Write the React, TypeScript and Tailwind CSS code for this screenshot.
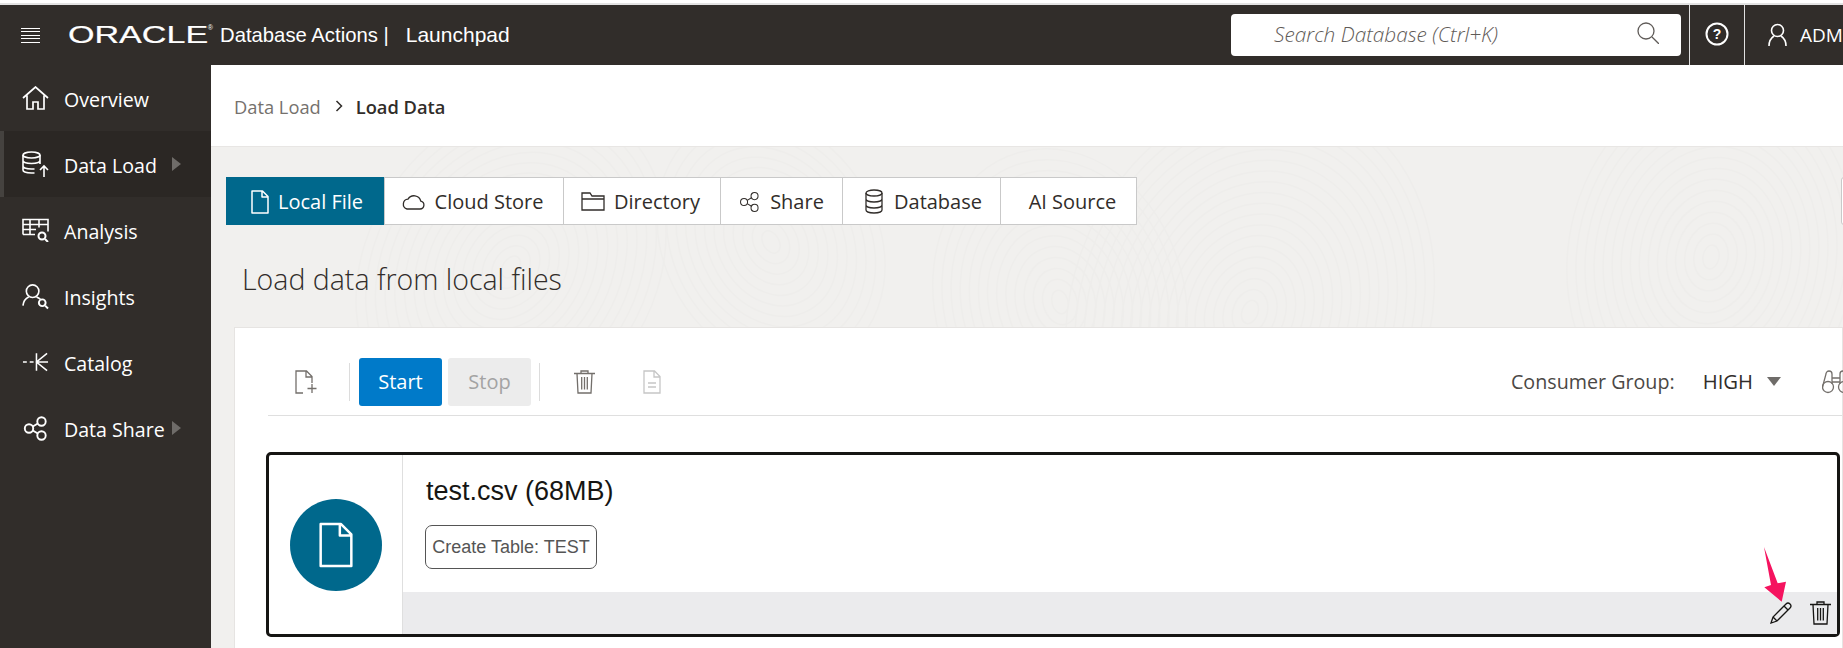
import type { ReactNode } from 'react';

const SEGOE = 'font-["Open_Sans",sans-serif]';

function Icon({ className, vb = '0 0 24 24', children }: { className: string; vb?: string; children: ReactNode }) {
  return (
    <svg viewBox={vb} fill="none" stroke="currentColor" strokeWidth="1.3" className={className}>
      {children}
    </svg>
  );
}

const HomeIcon = () => (
  <Icon vb="0 0 27 24" className="w-[27px] h-[24px]">
    <path d="M1 12 13.5 1 26 12M5 9.5V23h6v-7h5v7h6V9.5" strokeWidth="1.7" />
  </Icon>
);
const DataLoadIcon = () => (
  <Icon vb="0 0 27 26" className="w-[27px] h-[26px]">
    <ellipse cx="9.500" cy="4" rx="8.500" ry="3" strokeWidth="1.6" />
    <path d="M1 4v15c0 1.7 3.800 3 8.500 3h3M1 9.500c0 1.700 3.800 3 8.500 3s8.500-1.300 8.500-3M1 15c0 1.700 3.800 3 8.500 3h3M18 4v9" strokeWidth="1.6" />
    <path d="M22 26V15M18 19l4-4 4 4" strokeWidth="1.6" />
  </Icon>
);
const AnalysisIcon = () => (
  <Icon vb="0 0 27 24" className="w-[27px] h-[24px]">
    <path d="M1 16.500V1.500h25v12M1 6.500h25M1 11.500h13M1 16.500h12M8 1.500v15M17 1.500v8" strokeWidth="1.600" />
    <circle cx="20" cy="18" r="3.500" strokeWidth="2" />
    <path d="m23 21 3 3" strokeWidth="2" />
  </Icon>
);
const InsightsIcon = () => (
  <Icon vb="0 0 28 27" className="w-[28px] h-[27px]">
    <circle cx="11" cy="8" r="6.500" strokeWidth="1.700" />
    <path d="M7 14c-3.500 1.500-5.500 4-6 9M15 14c1.500.6 2.800 1.300 4 2.300" strokeWidth="1.700" />
    <circle cx="21" cy="20" r="3.500" strokeWidth="2" />
    <path d="m24 23 3 3" strokeWidth="2" />
  </Icon>
);
const CatalogIcon = () => (
  <Icon vb="0 0 28 20" className="w-[28px] h-[20px]">
    <path d="M1 10h4M8 10h4M15 1v18M26 1 15 10l11 9M15 10h12" strokeWidth="1.600" />
  </Icon>
);
const ShareIcon = ({ className = 'w-[25px] h-[25px]', sw = '1.900' }: { className?: string; sw?: string }) => (
  <Icon vb="0 0 25 25" className={className}>
    <circle cx="6" cy="12.500" r="4.200" strokeWidth={sw} />
    <circle cx="18.500" cy="5.500" r="4.200" strokeWidth={sw} />
    <circle cx="18.500" cy="19.500" r="4.200" strokeWidth={sw} />
    <path d="m9.800 10.500 5-3M9.800 14.500l5 3" strokeWidth={sw} />
  </Icon>
);
const FileIcon = ({ className, sw = '1.300' }: { className: string; sw?: string }) => (
  <Icon vb="0 0 18 24" className={className}>
    <path d="M1 1h10.500L17 6.500V23H1zM11 1v6h6" strokeWidth={sw} strokeLinejoin="round" />
  </Icon>
);
const TrashIcon = ({ className }: { className: string }) => (
  <Icon vb="0 0 21 24" className={className}>
    <path d="M0 3.500h21M7 3.500V1h7v2.500M3 3.500 4 23h13l1-19.500M7.700 7v12.500M10.500 7v12.500M13.300 7v12.500" />
  </Icon>
);

const navItems = [
  { label: 'Overview', icon: <HomeIcon /> },
  { label: 'Data Load', icon: <DataLoadIcon />, active: true, more: true },
  { label: 'Analysis', icon: <AnalysisIcon /> },
  { label: 'Insights', icon: <InsightsIcon /> },
  { label: 'Catalog', icon: <CatalogIcon /> },
  { label: 'Data Share', icon: <ShareIcon />, more: true },
];

const tabs = [
  {
    label: 'Local File',
    box: 'w-[158px] pl-[4px] gap-[9px]',
    active: true,
    icon: <FileIcon className="w-[18px] h-[24px]" sw="1.500" />,
  },
  {
    label: 'Cloud Store',
    box: 'w-[179px] pr-[4px] gap-[10px]',
    icon: (
      <Icon vb="0 0 24 17" className="w-[24px] h-[17px]">
        <path d="M6 16h13a4 4 0 0 0 .8-7.900A7 7 0 0 0 7 6.200 5 5 0 0 0 6 16z" />
      </Icon>
    ),
  },
  {
    label: 'Directory',
    box: 'w-[157px] pr-[3px] gap-[9px]',
    icon: (
      <Icon vb="0 0 24 19" className="w-[24px] h-[19px]">
        <path d="M1 18V1h8l2 3h12v14zM1 7h22" />
      </Icon>
    ),
  },
  { label: 'Share', box: 'w-[122px] gap-[10px]', icon: <ShareIcon className="w-[21px] h-[24px]" sw="1.200" /> },
  {
    label: 'Database',
    box: 'w-[158px] pl-[4px] gap-[11px]',
    icon: (
      <Icon vb="0 0 18 25" className="w-[18px] h-[25px]">
        <ellipse cx="9" cy="4" rx="8" ry="3" />
        <path d="M1 4v17c0 1.700 3.600 3 8 3s8-1.300 8-3V4M1 10c0 1.700 3.600 3 8 3s8-1.300 8-3M1 16c0 1.700 3.600 3 8 3s8-1.300 8-3" />
      </Icon>
    ),
  },
  { label: 'AI Source', box: 'w-[136px] pl-[8px]' },
];

// faint fingerprint swirls behind the content area
const swirls = [
  { cx: 1039, cy: 165, rings: 20, rot: 20 },
  { cx: 849, cy: 155, rings: 14, rot: -15 },
  { cx: 300, cy: 120, rings: 16, rot: 35 },
  { cx: 560, cy: 95, rings: 12, rot: -30 },
  { cx: 1500, cy: 110, rings: 16, rot: 10 },
];

function Background() {
  return (
    <svg className="absolute inset-0 w-full h-full" fill="none" stroke="#eeedeb" strokeWidth="1.500">
      {swirls.map((s) =>
        Array.from({ length: s.rings }, (_, i) => (
          <ellipse
            key={`${s.cx}-${i}`}
            cx={s.cx}
            cy={s.cy}
            rx={8 + i * 9}
            ry={12 + i * 11}
            transform={`rotate(${s.rot} ${s.cx} ${s.cy})`}
          />
        )),
      )}
    </svg>
  );
}

export default function App() {
  return (
    <div className={`h-[648px] w-[1843px] overflow-hidden bg-white flex flex-col pt-[3px] ${SEGOE}`}>
      <div className="h-[2px] shrink-0 bg-[#e3e3e3]" />

      {/* Top bar */}
      <header className="h-[60px] shrink-0 bg-[#312d2a] text-white flex items-center">
        <div className="w-[19px] h-[15px] ml-[21px] flex flex-col justify-between shrink-0">
          {[0, 1, 2, 3, 4].map((i) => (
            <span key={i} className="block h-px bg-white" />
          ))}
        </div>
        {/* logo wordmark: wide letters, so the text is stretched */}
        <div className='relative w-[145px] h-[24px] ml-[28px] shrink-0 font-["Liberation_Sans",sans-serif]'>
          <span className="absolute left-0 top-0 origin-left scale-x-[1.42] text-[24px] leading-[24px] [-webkit-text-stroke:0.2px_white]">ORACLE</span>
          <span className="absolute right-0 top-[1px] text-[7px] leading-[8px]">®</span>
        </div>
        <span className='ml-[7px] text-[20.300px] font-["Liberation_Sans",sans-serif] whitespace-nowrap'>Database Actions |</span>
        <span className='ml-[17px] text-[21px] font-["Liberation_Sans",sans-serif]'>Launchpad</span>

        <div className="ml-auto w-[450px] h-[42px] bg-white rounded-[4px] flex items-center pl-[43px] pr-[22px] shrink-0">
          <span className="italic font-light text-[20.800px] text-[#5f5b58] whitespace-nowrap">Search Database (Ctrl+K)</span>
          <Icon vb="0 0 22 22" className="ml-auto w-[22px] h-[22px] text-[#5f5b58] -mt-[5px]">
            <circle cx="9" cy="9" r="8" />
            <path d="m15 15 7 7" />
          </Icon>
        </div>
        <div className="ml-[8px] w-[56px] h-full border-x border-[#e0e0e0] flex items-center justify-center shrink-0">
          <Icon vb="0 0 24 24" className="w-[24px] h-[24px] -mt-[2px]">
            <circle cx="12" cy="12" r="10.500" strokeWidth="2" />
            <text x="12" y="17" textAnchor="middle" fontSize="14" fontWeight="700" fill="#fff" stroke="none" fontFamily="Liberation Sans, sans-serif">?</text>
          </Icon>
        </div>
        <div className="w-[98px] h-full flex items-center pl-[23px] gap-[13px] shrink-0">
          <Icon vb="0 0 19 24" className="w-[19px] h-[24px] shrink-0">
            <circle cx="9.500" cy="7.500" r="6" strokeWidth="1.600" />
            <path d="M6 13C3 15 1 18 1 23M13 13c3 2 5 5 5 10" strokeWidth="1.600" />
          </Icon>
          <span className="text-[19px] whitespace-nowrap">ADM</span>
        </div>
      </header>

      <div className="flex-1 flex min-h-0">
        {/* Sidebar */}
        <aside className="w-[211px] shrink-0 bg-[#312d2a] text-white">
          {navItems.map((item) => (
            <div
              key={item.label}
              className={`h-[66px] flex items-center ${item.active ? 'bg-[#2b2724] border-l-4 border-[#45423f] pl-[18px]' : 'pl-[22px]'}`}
            >
              <span className="w-[27px] flex justify-center shrink-0">{item.icon}</span>
              <span className="ml-[15px] mt-[3px] text-[19.600px] whitespace-nowrap">{item.label}</span>
              {item.more && <span className="ml-auto mr-[30px] w-0 h-0 border-y-[7px] border-y-transparent border-l-[9px] border-l-[#6f6c69]" />}
            </div>
          ))}
        </aside>

        <main className="flex-1 min-w-0 flex flex-col">
          {/* Breadcrumb */}
          <div className="h-[82px] shrink-0 bg-white border-b border-[#e8e6e4] flex items-center pl-[23px] pt-[3px] text-[18.300px]">
            <span className="text-[#75716d]">Data Load</span>
            <svg viewBox="0 0 8 12" fill="none" stroke="#312d2a" strokeWidth="1.500" className="w-[8px] h-[12px] ml-[14px] -mt-[2px]">
              <path d="m1.500 1 5 5-5 5" />
            </svg>
            <span className="ml-[13px] font-semibold text-[#312d2a]">Load Data</span>
          </div>

          <div className="relative flex-1 min-h-0 bg-[#f1f0ee] pl-[15px] pt-[30px]">
            <Background />

            <div className="relative flex items-start">
              {/* Tabs */}
              <div className="flex h-[48px] border border-[#c9c9c9] border-l-0 bg-white text-[#312d2a]">
                {tabs.map((tab) => (
                  <div
                    key={tab.label}
                    className={`${tab.box} flex items-center justify-center text-[20px] pt-[1px] whitespace-nowrap ${
                      tab.active ? 'bg-[#00688c] text-white -my-px h-[48px]' : 'border-l border-[#c9c9c9]'
                    }`}
                  >
                    {tab.icon}
                    <span>{tab.label}</span>
                  </div>
                ))}
              </div>
              <div className="ml-[704px] w-[40px] h-[48px] bg-white border border-[#c9c9c9] rounded-[3px] shrink-0" />
            </div>

            <h1 className="relative mt-[34px] ml-[16px] text-[28.500px] font-light leading-[40px] text-[#312d2a]">Load data from local files</h1>

            {/* Card */}
            <section className="relative mt-[28px] ml-[8px] bg-white border border-[#e6e4e2] h-[400px] pl-[33px]">
              <div className="h-[88px] pt-[20px] flex items-center border-b border-[#dfdfdf]">
                <FileAddIcon />
                <span className="ml-[32px] w-px h-[38px] bg-[#dcdcdc]" />
                <button className="ml-[9px] w-[83px] h-[48px] rounded-[3px] bg-[#007ac9] text-white text-[20px] font-medium">Start</button>
                <button className="ml-[6px] w-[83px] h-[48px] rounded-[3px] bg-[#ececec] text-[#a3a3a3] text-[20px]">Stop</button>
                <span className="ml-[8px] w-px h-[38px] bg-[#dcdcdc]" />
                <span className="ml-[34px] text-[#736f6b]">
                  <TrashIcon className="w-[21px] h-[24px]" />
                </span>
                <span className="ml-[48px] text-[#c6c6c6]">
                  <Icon vb="0 0 18 24" className="w-[18px] h-[24px]">
                    <path d="M1 1h10.500L17 6.500V23H1zM11 1v6h6M5 13h8M5 17h8" />
                  </Icon>
                </span>
                <span className="ml-auto text-[19.700px] text-[#4b4845] whitespace-nowrap">Consumer Group:</span>
                <span className="ml-[28px] text-[20.300px] text-[#312d2a]">HIGH</span>
                <span className="ml-[14px] w-0 h-0 border-x-[7px] border-x-transparent border-t-[9px] border-t-[#6f6c69]" />
                <span className="ml-[41px] mr-[-8px] text-[#736f6b] shrink-0">
                  <Icon vb="0 0 28 24" className="w-[28px] h-[24px]">
                    <circle cx="6" cy="17" r="5.500" />
                    <circle cx="22" cy="17" r="5.500" />
                    <path d="M.5 17 4 4a3 3 0 0 1 6 0v10M27.500 17 24 4a3 3 0 0 0-6 0v10M10 8h8M10 12h8" />
                  </Icon>
                </span>
              </div>

              {/* File row */}
              <div className="relative mt-[36px] -ml-[2px] mr-[2px] h-[185px] border-[3px] border-[#161513] rounded-[5px] flex bg-white">
                <div className="w-[134px] shrink-0 border-r border-[#dfdfdf] flex items-center justify-center">
                  <div className="w-[92px] h-[92px] rounded-full bg-[#00688c] flex items-center justify-center text-white">
                    <FileIcon className="w-[36px] h-[46px]" sw="1.300" />
                  </div>
                </div>
                <div className="flex-1 flex flex-col font-['Liberation_Sans',sans-serif]">
                  <div className="flex-1 pl-[23px]">
                    <div className="mt-[19px] text-[27px] leading-[34px] text-[#161513]">test.csv (68MB)</div>
                    <div className="mt-[17px] -ml-[1px] w-[172px] h-[44px] border border-[#555] rounded-[7px] flex items-center justify-center text-[18px] text-[#555]">
                      Create Table: TEST
                    </div>
                  </div>
                  <div className="h-[42px] bg-[#ebebed] flex items-center justify-end pr-[6px] gap-[18px] text-[#161513]">
                    <Icon vb="0 0 22 22" className="w-[22px] h-[22px]">
                      <path d="M1 21l2-6L16 2a2.200 2.200 0 0 1 4 4L7 19zM3 15l4 4M14 4l4 4" />
                    </Icon>
                    <TrashIcon className="w-[21px] h-[24px]" />
                  </div>
                </div>
              </div>
            </section>

            {/* Callout arrow on the edit icon */}
            <svg viewBox="0 0 28 58" className="absolute left-[1549px] top-[398px] w-[28px] h-[58px]">
              <path d="M4 2 17.700 38.300 26 36.700 21.700 56.700 4.300 42.300 11 40Z" fill="#f5135f" />
            </svg>
          </div>
        </main>
      </div>
    </div>
  );
}

function FileAddIcon() {
  return (
    <span className="ml-[27px] text-[#736f6b]">
      <Icon vb="0 0 22 24" className="w-[22px] h-[24px]">
        <path d="M8 23H1V1h10.500L17 6.500V13M11 1v6h6M17 14v9M12.500 18.500h9" />
      </Icon>
    </span>
  );
}
